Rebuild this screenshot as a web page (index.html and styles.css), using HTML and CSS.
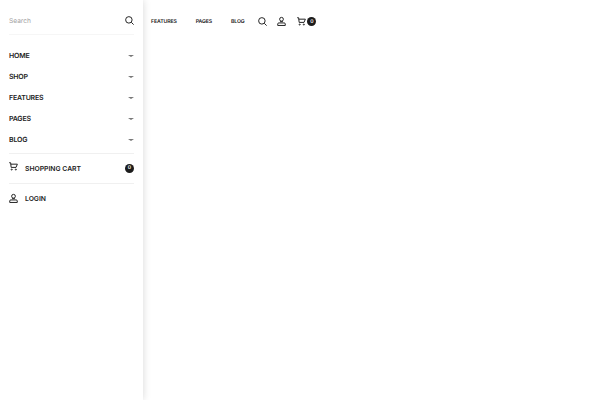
FILE: index.html
```html
<!DOCTYPE html>
<html lang="en">
<head>
<meta charset="utf-8">
<title>Menu</title>
<link rel="stylesheet" href="styles.css">
</head>
<body>
<aside class="drawer">
  <div class="search">
    <span class="search-label">Search</span>
    <svg class="icon" viewBox="0 0 10 10"><circle cx="4.3" cy="4.3" r="3.6"/><path d="M7 7l2.6 2.6"/></svg>
  </div>
  <ul class="menu">
    <li><span>HOME</span><i class="caret"></i></li>
    <li><span>SHOP</span><i class="caret"></i></li>
    <li><span>FEATURES</span><i class="caret"></i></li>
    <li><span>PAGES</span><i class="caret"></i></li>
    <li><span>BLOG</span><i class="caret"></i></li>
  </ul>
  <div class="row row-cart">
    <svg class="icon cart-side" viewBox="0 0 10 10"><path d="M.2 .8h1.6l.6 5.2h5.4l1.5-3.6H2"/><circle cx="3" cy="8.4" r=".6"/><circle cx="7.6" cy="8.4" r=".6"/></svg>
    <span class="row-label">SHOPPING CART</span>
    <b class="badge">0</b>
  </div>
  <div class="row row-login">
    <svg class="icon" viewBox="0 0 10 10"><circle cx="5" cy="2.5" r="2.1"/><path d="M3.4 5.2h3.2M.8 9.4V7.8q0-1.2 1.2-1.2h6q1.2 0 1.2 1.2v1.6z"/></svg>
    <span class="row-label">LOGIN</span>
  </div>
</aside>
<nav class="topbar">
  <a class="link">FEATURES</a>
  <a class="link">PAGES</a>
  <a class="link link-last">BLOG</a>
  <svg class="icon" viewBox="0 0 10 10"><circle cx="4.3" cy="4.3" r="3.6"/><path d="M7 7l2.6 2.6"/></svg>
  <svg class="icon" viewBox="0 0 10 10"><circle cx="5" cy="2.5" r="2.1"/><path d="M3.4 5.2h3.2M.8 9.4V7.8q0-1.2 1.2-1.2h6q1.2 0 1.2 1.2v1.6z"/></svg>
  <div class="cart">
    <svg class="icon" viewBox="0 0 10 10"><path d="M.2 .8h1.6l.6 5.2h5.4l1.5-3.6H2"/><circle cx="3" cy="8.4" r=".6"/><circle cx="7.6" cy="8.4" r=".6"/></svg>
    <b class="badge">0</b>
  </div>
</nav>
</body>
</html>
```
FILE: styles.css
```css
* { box-sizing: border-box; }
html, body { margin: 0; height: 100%; background: #fff; }
body {
  display: flex;
  align-items: flex-start;
  font-family: "Inter", "Liberation Sans", sans-serif;
  color: #222;
  overflow: hidden;
  text-rendering: geometricPrecision;
}
.drawer {
  width: 143px;
  height: 400px;
  flex: none;
  padding: 0 9px;
  background: #fff;
  box-shadow: 0 0 8px rgba(0,0,0,.16);
}
.icon {
  width: 9px;
  height: 9px;
  flex: none;
  fill: none;
  stroke: #222;
  stroke-width: 1.1;
  overflow: visible;
}
.search {
  height: 35px;
  display: flex;
  align-items: center;
  justify-content: space-between;
  padding-top: 7px;
  border-bottom: 1px solid #f6f6f6;
}
.search-label { font-size: 6.6px; color: #a4a4a4; padding-top: 1px; }
.menu {
  list-style: none;
  margin: 0;
  padding: 9.5px 0 2.5px;
  border-bottom: 1px solid #f0f0f0;
}
.menu li {
  height: 21.2px;
  display: flex;
  align-items: center;
  justify-content: space-between;
  font-size: 7px;
  font-weight: 600;
  letter-spacing: -.2px;
}
.caret {
  width: 0;
  height: 0;
  margin-top: 1px;
  border: 3px solid transparent;
  border-top: 2.5px solid #777;
  border-bottom: 0;
}
.row {
  height: 30px;
  display: flex;
  align-items: center;
  gap: 7px;
}
.row-cart { border-bottom: 1px solid #f0f0f0; }
.row-login { height: 29px; }
.cart-side { margin-top: -3px; }
.row-label { font-size: 6.8px; font-weight: 600; flex: 1; }
.badge {
  width: 9px;
  height: 9px;
  border-radius: 50%;
  background: #1c1c1c;
  color: #fff;
  font-size: 5px;
  font-weight: 600;
  display: flex;
  align-items: center;
  justify-content: center;
  flex: none;
}
.topbar {
  display: flex;
  align-items: center;
  height: 43px;
  padding-left: 8px;
  gap: 10.5px;
}
.link { font-size: 5.2px; font-weight: 600; margin-right: 8.5px; letter-spacing: -.12px; }
.link-last { margin-right: 2.8px; }
.cart { display: flex; align-items: center; gap: 1.5px; }
```
